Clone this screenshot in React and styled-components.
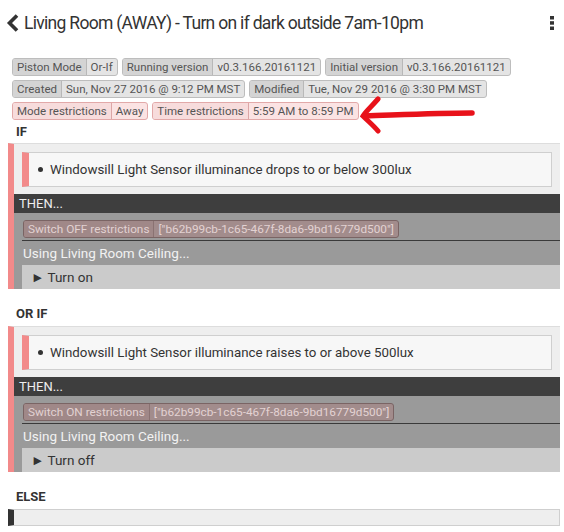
import React from "react";
import styled, { createGlobalStyle } from "styled-components";

const Global = createGlobalStyle`
  html, body { margin: 0; padding: 0; background: #fff; }
  body { font-family: Roboto, "Noto Sans", "Liberation Sans", sans-serif; color: #333; }
`;

const Page = styled.div`
  position: relative;
  width: 564px;
  height: 532px;
  overflow: hidden;
  background: #fff;
`;

const Header = styled.div`
  display: flex;
  align-items: center;
  height: 30px;
  padding: 8px 9px 0 6px;
`;

const Title = styled.h1`
  flex: 1;
  margin: 0 0 0 4px;
  font-size: 17.5px;
  letter-spacing: -0.7px;
  font-weight: 400;
  color: #333;
  white-space: nowrap;
`;

const Badges = styled.div`
  display: flex;
  flex-direction: column;
  gap: 4px;
  padding: 20px 0 0 12px;
`;

const BadgeRow = styled.div`
  display: flex;
  gap: 4px;
`;

const Badge = styled.span`
  display: inline-flex;
  align-items: stretch;
  height: 18px;
  box-sizing: border-box;
  border: 1px solid ${(p) => (p.$pink ? "#e2a9a9" : "#bdbdbd")};
  border-radius: 3px;
  background: ${(p) => (p.$pink ? "#fbe3e3" : "#e4e4e4")};
  font-size: 11.5px;
  color: #555;
  overflow: hidden;
`;

const BadgeLabel = styled.span`
  display: flex;
  align-items: center;
  padding: 0 4px;
  background: ${(p) => (p.$pink ? "#f7dcdc" : "#d4d4d4")};
  border-right: 1px solid ${(p) => (p.$pink ? "#dca6a6" : "#b8b8b8")};
`;

const BadgeValue = styled.span`
  display: flex;
  align-items: center;
  padding: 0 4px;
`;

const SectionLabel = styled.div`
  font-size: 13px;
  font-weight: 700;
  color: #333;
  padding: ${(p) => p.$pad || "5px 0 4px 16px"};
  line-height: 14px;
`;

const Block = styled.div`
  margin: 0 4px 0 8px;
  border-left: 6px solid #f28a8a;
  background: #eee;
  border-top: 1px solid #ddd;
  box-sizing: border-box;
`;

const CondWrap = styled.div`
  padding: 8px 8px 7px 8px;
`;

const Condition = styled.div`
  display: flex;
  align-items: center;
  height: 35px;
  box-sizing: border-box;
  border: 1px solid #cfcfcf;
  border-left: 7px solid #f28a8a;
  background: #f7f7f7;
  padding-left: 9px;
  font-size: 13.3px;
  color: #333;
`;

const Bullet = styled.span`
  display: inline-block;
  width: 5px;
  height: 5px;
  border-radius: 50%;
  background: #333;
  margin-right: 7px;
`;

const ThenBar = styled.div`
  height: 19px;
  line-height: 19px;
  background: #3e3e3e;
  color: #eee;
  font-size: 13px;
  padding-left: 5px;
`;

const ActionArea = styled.div`
  background: #9a9a9a;
  padding: 5px 0 0 8px;
`;

const RBadge = styled.span`
  display: inline-flex;
  height: 18px;
  margin-left: 1px;
  box-sizing: border-box;
  border: 1px solid #7a6464;
  border-radius: 3px;
  background: #a28c8c;
  color: #e2d2d2;
  font-size: 11.8px;
  overflow: hidden;
`;

const RLabel = styled.span`
  display: flex;
  align-items: center;
  padding: 0 4px;
  border-right: 1px solid #8a7272;
  background: #a08888;
`;

const RValue = styled.span`
  display: flex;
  align-items: center;
  padding: 0 4px;
`;

const Divider = styled.div`
  height: 1px;
  background: #3a3a3a;
  margin-top: 2px;
`;

const Using = styled.div`
  height: 24px;
  line-height: 24px;
  color: #f2f2f2;
  font-size: 13.5px;
  padding-left: 1px;
`;

const Task = styled.div`
  height: 24px;
  line-height: 24px;
  background: #cbcbcb;
  color: #333;
  font-size: 13.5px;
  padding-left: 9px;
`;

const ElseBlock = styled.div`
  margin: 5px 4px 0 8px;
  height: 17px;
  box-sizing: border-box;
  border: 1px solid #cfcfcf;
  border-left: 6px solid #333;
  background: #eee;
`;

const Arrow = styled.svg`
  position: absolute;
  left: 356px;
  top: 94px;
`;

const Dots = () => (
  <svg width="6" height="16" viewBox="0 0 6 16">
    <rect x="1" y="1" width="4" height="3.5" fill="#333" />
    <rect x="1" y="6.2" width="4" height="3.5" fill="#333" />
    <rect x="1" y="11.5" width="4" height="3.5" fill="#333" />
  </svg>
);

const Chevron = () => (
  <svg width="14" height="18" viewBox="0 0 14 18">
    <path d="M11 1.5 L3.5 9 L11 16.5" fill="none" stroke="#333" strokeWidth="3.6" />
  </svg>
);

const Info = ({ label, value, pink }) => (
  <Badge $pink={pink}>
    <BadgeLabel $pink={pink}>{label}</BadgeLabel>
    <BadgeValue>{value}</BadgeValue>
  </Badge>
);

const IfBlock = ({ condition, restriction, task }) => (
  <Block>
    <CondWrap>
      <Condition>
        <Bullet />
        {condition}
      </Condition>
    </CondWrap>
    <ThenBar>THEN...</ThenBar>
    <ActionArea>
      <RBadge>
        <RLabel>{restriction}</RLabel>
        <RValue>["b62b99cb-1c65-467f-8da6-9bd16779d500"]</RValue>
      </RBadge>
      <Divider />
      <Using>Using Living Room Ceiling...</Using>
      <Task>► {task}</Task>
    </ActionArea>
  </Block>
);

export default function App() {
  return (
    <Page>
      <Global />
      <Header>
        <Chevron />
        <Title>Living Room (AWAY) - Turn on if dark outside 7am-10pm</Title>
        <Dots />
      </Header>
      <Badges>
        <BadgeRow>
          <Info label="Piston Mode" value="Or-If" />
          <Info label="Running version" value="v0.3.166.20161121" />
          <Info label="Initial version" value="v0.3.166.20161121" />
        </BadgeRow>
        <BadgeRow>
          <Info label="Created" value="Sun, Nov 27 2016 @ 9:12 PM MST" />
          <Info label="Modified" value="Tue, Nov 29 2016 @ 3:30 PM MST" />
        </BadgeRow>
        <BadgeRow>
          <Info pink label="Mode restrictions" value="Away" />
          <Info pink label="Time restrictions" value="5:59 AM to 8:59 PM" />
        </BadgeRow>
      </Badges>
      <SectionLabel>IF</SectionLabel>
      <IfBlock
        condition="Windowsill Light Sensor illuminance drops to or below 300lux"
        restriction="Switch OFF restrictions"
        task="Turn on"
      />
      <SectionLabel $pad="18px 0 5px 16px">OR IF</SectionLabel>
      <IfBlock
        condition="Windowsill Light Sensor illuminance raises to or above 500lux"
        restriction="Switch ON restrictions"
        task="Turn off"
      />
      <SectionLabel $pad="18px 0 0 16px">ELSE</SectionLabel>
      <ElseBlock />
      <Arrow width="122" height="40" viewBox="0 0 122 40">
        <path
          d="M22 5 C16 12, 10 17, 7 22 C12 27, 18 32, 22 37"
          fill="none"
          stroke="#e8121a"
          strokeWidth="5"
          strokeLinecap="round"
        />
        <path
          d="M9 22 C40 21, 80 19, 116 19"
          fill="none"
          stroke="#e8121a"
          strokeWidth="5.5"
          strokeLinecap="round"
        />
      </Arrow>
    </Page>
  );
}
